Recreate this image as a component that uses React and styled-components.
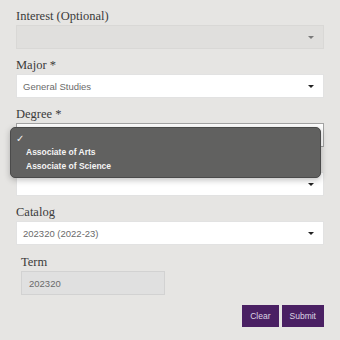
import styled, { createGlobalStyle } from "styled-components";

const GlobalStyle = createGlobalStyle`
  html, body {
    margin: 0;
    padding: 0;
    background: #e6e5e3;
  }
  * {
    box-sizing: border-box;
  }
`;

// the 4th field's label sits under the open degree menu, so it shows nothing
const fields = [
  { label: "Interest (Optional)", value: "", disabled: true },
  { label: "Major *", value: "General Studies" },
  { label: "Degree *", value: "", focused: true },
  { label: "\u00a0", value: "" },
  { label: "Catalog", value: "202320 (2022-23)" },
];

const degreeOptions = ["Associate of Arts", "Associate of Science"];

function SelectBox({ value, disabled, focused }) {
  return (
    <Select $disabled={disabled} $focused={focused}>
      <SelectText>{value}</SelectText>
      <Caret $disabled={disabled} />
    </Select>
  );
}

function App() {
  return (
    <>
      <GlobalStyle />
      <Page>
        <Form>
          {fields.map((f, i) => (
            <Field key={i}>
              <Label>{f.label}</Label>
              <SelectBox
                value={f.value}
                disabled={f.disabled}
                focused={f.focused}
              />
            </Field>
          ))}
          <TermField>
            <Label>Term</Label>
            <TermInput>202320</TermInput>
          </TermField>
          <Actions>
            <Button>Clear</Button>
            <Button>Submit</Button>
          </Actions>
        </Form>
        <Popup>
          <PopupRow>
            <Check>✓</Check>
          </PopupRow>
          {degreeOptions.map((o) => (
            <PopupRow key={o}>
              <OptionText>{o}</OptionText>
            </PopupRow>
          ))}
        </Popup>
      </Page>
    </>
  );
}

export default App;

const Page = styled.div`
  position: relative;
  width: 340px;
  height: 340px;
  overflow: hidden;
`;
const Form = styled.div`
  padding: 9px 16px 0 16px;
  display: flex;
  flex-direction: column;
`;
const Field = styled.div`
  display: flex;
  flex-direction: column;
  margin-bottom: 9px;
`;
const Label = styled.div`
  font-family: "Liberation Serif", "Times New Roman", serif;
  font-size: 12.5px;
  line-height: 15px;
  color: #3a3a3a;
  margin-bottom: 1px;
`;
const Select = styled.div`
  height: 24px;
  display: flex;
  align-items: center;
  justify-content: space-between;
  padding: 0 9px 0 6px;
  background: ${(p) => (p.$disabled ? "#e0dfdd" : "#ffffff")};
  border: 1px solid
    ${(p) => (p.$focused ? "#a3a3a3" : p.$disabled ? "#d9d8d6" : "#e2e2e2")};
`;
const SelectText = styled.span`
  font-family: "Liberation Sans", Arial, sans-serif;
  font-size: 9.5px;
  color: #6a6a6a;
`;
const Caret = styled.span`
  width: 0;
  height: 0;
  border-left: 3px solid transparent;
  border-right: 3px solid transparent;
  border-top: 3px solid ${(p) => (p.$disabled ? "#7a7a7a" : "#222")};
`;
const TermField = styled.div`
  display: flex;
  flex-direction: column;
  padding-left: 5px;
  margin-top: 1px;
`;
const TermInput = styled.div`
  width: 144px;
  height: 24px;
  display: flex;
  align-items: center;
  padding: 0 7px;
  background: #e0e0e0;
  border: 1px solid #d2d2d2;
  font-family: "Liberation Sans", Arial, sans-serif;
  font-size: 9.5px;
  color: #6a6a6a;
`;
const Actions = styled.div`
  display: flex;
  justify-content: flex-end;
  gap: 3px;
  margin-top: 10px;
`;
const Button = styled.button`
  height: 22px;
  padding: 0 8px;
  border: none;
  border-radius: 0;
  background: #4a2063;
  color: #ddd5e4;
  font-family: "Liberation Sans", Arial, sans-serif;
  font-size: 8.5px;
`;
const Popup = styled.div`
  position: absolute;
  left: 10px;
  top: 127px;
  width: 311px;
  height: 51px;
  padding: 3px 0 0 0;
  background: #616160;
  border: 1px solid #4a4a4a;
  border-radius: 5px;
  box-shadow: 0 2px 6px rgba(0, 0, 0, 0.25);
`;
const PopupRow = styled.div`
  height: 14px;
  display: flex;
  align-items: center;
  padding-left: 15px;
  position: relative;
`;
const Check = styled.span`
  position: absolute;
  left: 5px;
  font-family: "DejaVu Sans", sans-serif;
  font-size: 10px;
  color: #f2f2f2;
`;
const OptionText = styled.span`
  font-family: "Liberation Sans", Arial, sans-serif;
  font-weight: bold;
  font-size: 8.5px;
  color: #f4f4f4;
`;
